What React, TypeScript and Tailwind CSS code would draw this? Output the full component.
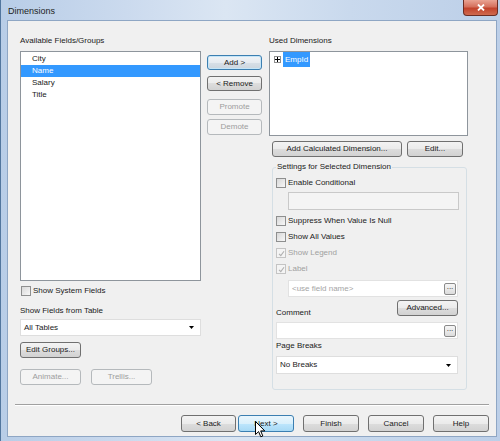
import type { ReactNode } from "react";

const btnNormal =
  "border-[#707070] bg-[linear-gradient(#f3f3f3_0%,#ebebeb_50%,#dddddd_50%,#d2d2d2_100%)] text-[#1a1a1a]";
const btnDisabled = "border-[#b5b9bc] bg-[#f4f4f4] text-[#9d9d9d]";
const btnHot =
  "border-[#3c7fb1] bg-[linear-gradient(#eaf6fd_0%,#d9f0fc_50%,#bee6fd_50%,#a7d9f5_100%)] text-[#1a1a1a]";
const btnDefault =
  "border-[#3c7fb1] bg-[linear-gradient(#f1f4f7_0%,#e6ebf0_50%,#d8e0e7_50%,#ccd5de_100%)] shadow-[inset_0_0_0_1px_#c4e5f8] text-[#1a1a1a]";

function Btn({
  children,
  className,
  kind = "normal",
}: {
  children: ReactNode;
  className: string;
  kind?: "normal" | "disabled" | "hot" | "default";
}) {
  const look =
    kind === "disabled"
      ? btnDisabled
      : kind === "hot"
        ? btnHot
        : kind === "default"
          ? btnDefault
          : btnNormal;
  return (
    <div
      className={`relative flex shrink-0 items-center justify-center rounded-[3px] border ${look} ${className}`}
    >
      {children}
    </div>
  );
}

function Check({ checked, disabled }: { checked?: boolean; disabled?: boolean }) {
  return (
    <span
      className={`flex h-[10px] w-[10px] shrink-0 items-center justify-center border ${
        disabled
          ? "border-[#c4c4c4] bg-[#f4f4f4]"
          : "border-[#8e8f8f] bg-[linear-gradient(135deg,#d8d8d8,#f7f7f7)]"
      }`}
    >
      {checked && (
        <svg width="7" height="7" viewBox="0 0 7 7" fill="none">
          <path
            d="M1 3.8 L2.8 5.6 L6 1.2"
            stroke={disabled ? "#b0b0b0" : "#333"}
            strokeWidth="1.1"
          />
        </svg>
      )}
    </span>
  );
}

function CheckRow({
  label,
  checked,
  disabled,
  className,
}: {
  label: string;
  checked?: boolean;
  disabled?: boolean;
  className: string;
}) {
  return (
    <div className={`flex h-[12px] items-center gap-[2px] ${className}`}>
      <Check checked={checked} disabled={disabled} />
      <span className={disabled ? "text-[#a0a0a0]" : ""}>{label}</span>
    </div>
  );
}

function Combo({ value, className }: { value: string; className: string }) {
  return (
    <div
      className={`flex items-center justify-between border border-[#dedede] bg-white pl-[3px] pr-[6px] ${className}`}
    >
      <span>{value}</span>
      <svg width="5" height="3" viewBox="0 0 5 3">
        <path d="M0 0 H5 L2.5 3 Z" fill="#000" />
      </svg>
    </div>
  );
}

function Dots() {
  return (
    <div className="flex h-[12px] w-[12px] items-center justify-center rounded-[2px] border border-[#8a8a8a] bg-[linear-gradient(#f6f6f6,#dcdcdc)] pb-[3px] text-[8px] leading-[8px]">
      ...
    </div>
  );
}

export default function App() {
  const fields = ["City", "Name", "Salary", "Title"];
  return (
    <div className="flex h-[441px] w-[500px] flex-col border-l border-[#52769e] bg-[linear-gradient(90deg,#b8cde7_0%,#cbdaee_25%,#dbe6f3_45%,#c9d9ed_70%,#bccfe8_100%)] font-['Liberation_Sans',Arial,sans-serif] text-[8px] leading-[10px] text-[#1a1a1a]">
      {/* Title bar */}
      <div className="flex h-[20px] shrink-0 items-start justify-between pr-[2px]">
        <span className="pl-[7px] pt-[6px] text-[9px] leading-[10px] text-[#1e1e1e]">
          Dimensions
        </span>
        <div className="flex h-[16px] w-[35px] items-center justify-center rounded-b-[4px] border border-t-0 border-[#6b2d24] bg-[linear-gradient(#e9a393_0%,#d5715d_45%,#c2432c_55%,#cf6a4f_100%)]">
          <svg width="8" height="7" viewBox="0 0 8 7">
            <path d="M1 0.5 L7 6.5 M7 0.5 L1 6.5" stroke="#fff" strokeWidth="1.8" />
          </svg>
        </div>
      </div>

      {/* Client area */}
      <div className="ml-[6px] mr-[3px] flex h-[417px] flex-col border border-[#8ea6c4] bg-[#f0f0f0] px-[7px] pt-[15px]">
        <div className="flex items-start pl-[5px]">
          {/* Left column */}
          <div className="flex w-[181px] flex-col">
            <span>Available Fields/Groups</span>
            <div className="mt-[5px] h-[230px] border border-[#8e959c] bg-white pt-[1px]">
              {fields.map((f) =>
                f === "Name" ? (
                  <div key={f} className="flex h-[12px] items-center bg-[#3399ff] pl-[11px] text-white">
                    {f}
                  </div>
                ) : (
                  <div key={f} className="flex h-[12px] items-center pl-[11px]">
                    {f}
                  </div>
                ),
              )}
            </div>
            <CheckRow label="Show System Fields" className="mt-[4px] pl-[1px]" />
            <span className="mt-[9px]">Show Fields from Table</span>
            <Combo value="All Tables" className="mt-[3px] h-[17px] w-[181px]" />
            <Btn className="mt-[6px] h-[16px] w-[61px]">Edit Groups...</Btn>
            <div className="mt-[11px] flex gap-[10px]">
              <Btn kind="disabled" className="h-[16px] w-[61px]">
                Animate...
              </Btn>
              <Btn kind="disabled" className="h-[16px] w-[61px]">
                Trellis...
              </Btn>
            </div>
          </div>

          {/* Middle buttons */}
          <div className="ml-[6px] mt-[19px] flex w-[55px] flex-col">
            <Btn kind="default" className="h-[15px] w-[55px]">
              Add &gt;
            </Btn>
            <Btn className="mt-[6px] h-[15px] w-[55px]">&lt; Remove</Btn>
            <Btn kind="disabled" className="mt-[8px] h-[16px] w-[55px]">
              Promote
            </Btn>
            <Btn kind="disabled" className="mt-[4px] h-[16px] w-[55px]">
              Demote
            </Btn>
          </div>

          {/* Right column */}
          <div className="ml-[7px] flex w-[199px] flex-col">
            <span>Used Dimensions</span>
            <div className="mt-[5px] h-[85px] border border-[#8e959c] bg-white">
              <div className="flex h-[15px] items-center pl-[4px]">
                <span className="flex h-[7px] w-[7px] items-center justify-center border border-[#8f8f8f] bg-white">
                  <svg width="5" height="5" viewBox="0 0 5 5">
                    <path d="M0 2.5 H5 M2.5 0 V5" stroke="#000" strokeWidth="1" />
                  </svg>
                </span>
                <span className="ml-[2px] flex h-[15px] items-center bg-[#3399ff] px-[2px] text-white">
                  EmpId
                </span>
              </div>
            </div>
            <div className="mt-[5px] flex gap-[5px] pl-[3px]">
              <Btn className="h-[16px] w-[130px]">Add Calculated Dimension...</Btn>
              <Btn className="h-[16px] w-[56px]">Edit...</Btn>
            </div>

            <fieldset className="ml-[3px] mt-[5px] w-[195px] rounded-[3px] border border-[#d5dfe5] pb-[15px] pl-[3px]">
              <legend className="px-[1px] leading-[10px]">
                Settings for Selected Dimension
              </legend>
              <CheckRow label="Enable Conditional" className="mt-[5px]" />
              <div className="ml-[12px] mt-[3px] h-[18px] w-[171px] border border-[#c9c9c9] bg-[#f4f4f4]" />
              <CheckRow label="Suppress When Value Is Null" className="mt-[5px]" />
              <CheckRow label="Show All Values" className="mt-[4px]" />
              <CheckRow label="Show Legend" checked disabled className="mt-[4px]" />
              <CheckRow label="Label" checked disabled className="mt-[4px]" />
              <div className="ml-[12px] mt-[5px] flex h-[17px] w-[170px] items-center justify-between border border-[#e2e2e2] bg-white pl-[3px] pr-[1px]">
                <span className="text-[#a5a5a5]">&lt;use field name&gt;</span>
                <Dots />
              </div>
              <div className="mt-[3px] flex w-[182px] items-start justify-between">
                <span className="mt-[8px]">Comment</span>
                <Btn className="h-[16px] w-[61px]">Advanced...</Btn>
              </div>
              <div className="mt-[4px] flex h-[17px] w-[182px] items-center justify-end border border-[#e2e2e2] bg-white pr-[1px]">
                <Dots />
              </div>
              <span className="mt-[2px] block">Page Breaks</span>
              <Combo value="No Breaks" className="mt-[5px] h-[18px] w-[182px]" />
            </fieldset>
          </div>
        </div>

        {/* Separator */}
        <div className="mt-[14px] h-[2px] border-t border-b border-t-[#a0a0a0] border-b-white" />

        {/* Bottom buttons */}
        <div className="mt-[9px] flex justify-end">
          <Btn className="h-[17px] w-[55px]">&lt; Back</Btn>
          <Btn kind="hot" className="ml-[2px] h-[17px] w-[56px]">
            Next &gt;
            <svg
              className="absolute left-[16px] top-[5px]"
              width="11"
              height="17"
              viewBox="0 0 11 17"
            >
              <path
                d="M0.5 0.5 L0.5 13.5 L3.6 10.6 L5.8 15.8 L7.8 15 L5.7 9.9 L9.8 9.9 Z"
                fill="#fff"
                stroke="#000"
                strokeWidth="1"
                strokeLinejoin="round"
              />
            </svg>
          </Btn>
          <Btn className="ml-[9px] h-[17px] w-[56px]">Finish</Btn>
          <Btn className="ml-[9px] h-[17px] w-[56px]">Cancel</Btn>
          <Btn className="ml-[9px] h-[17px] w-[56px]">Help</Btn>
        </div>
      </div>
    </div>
  );
}
